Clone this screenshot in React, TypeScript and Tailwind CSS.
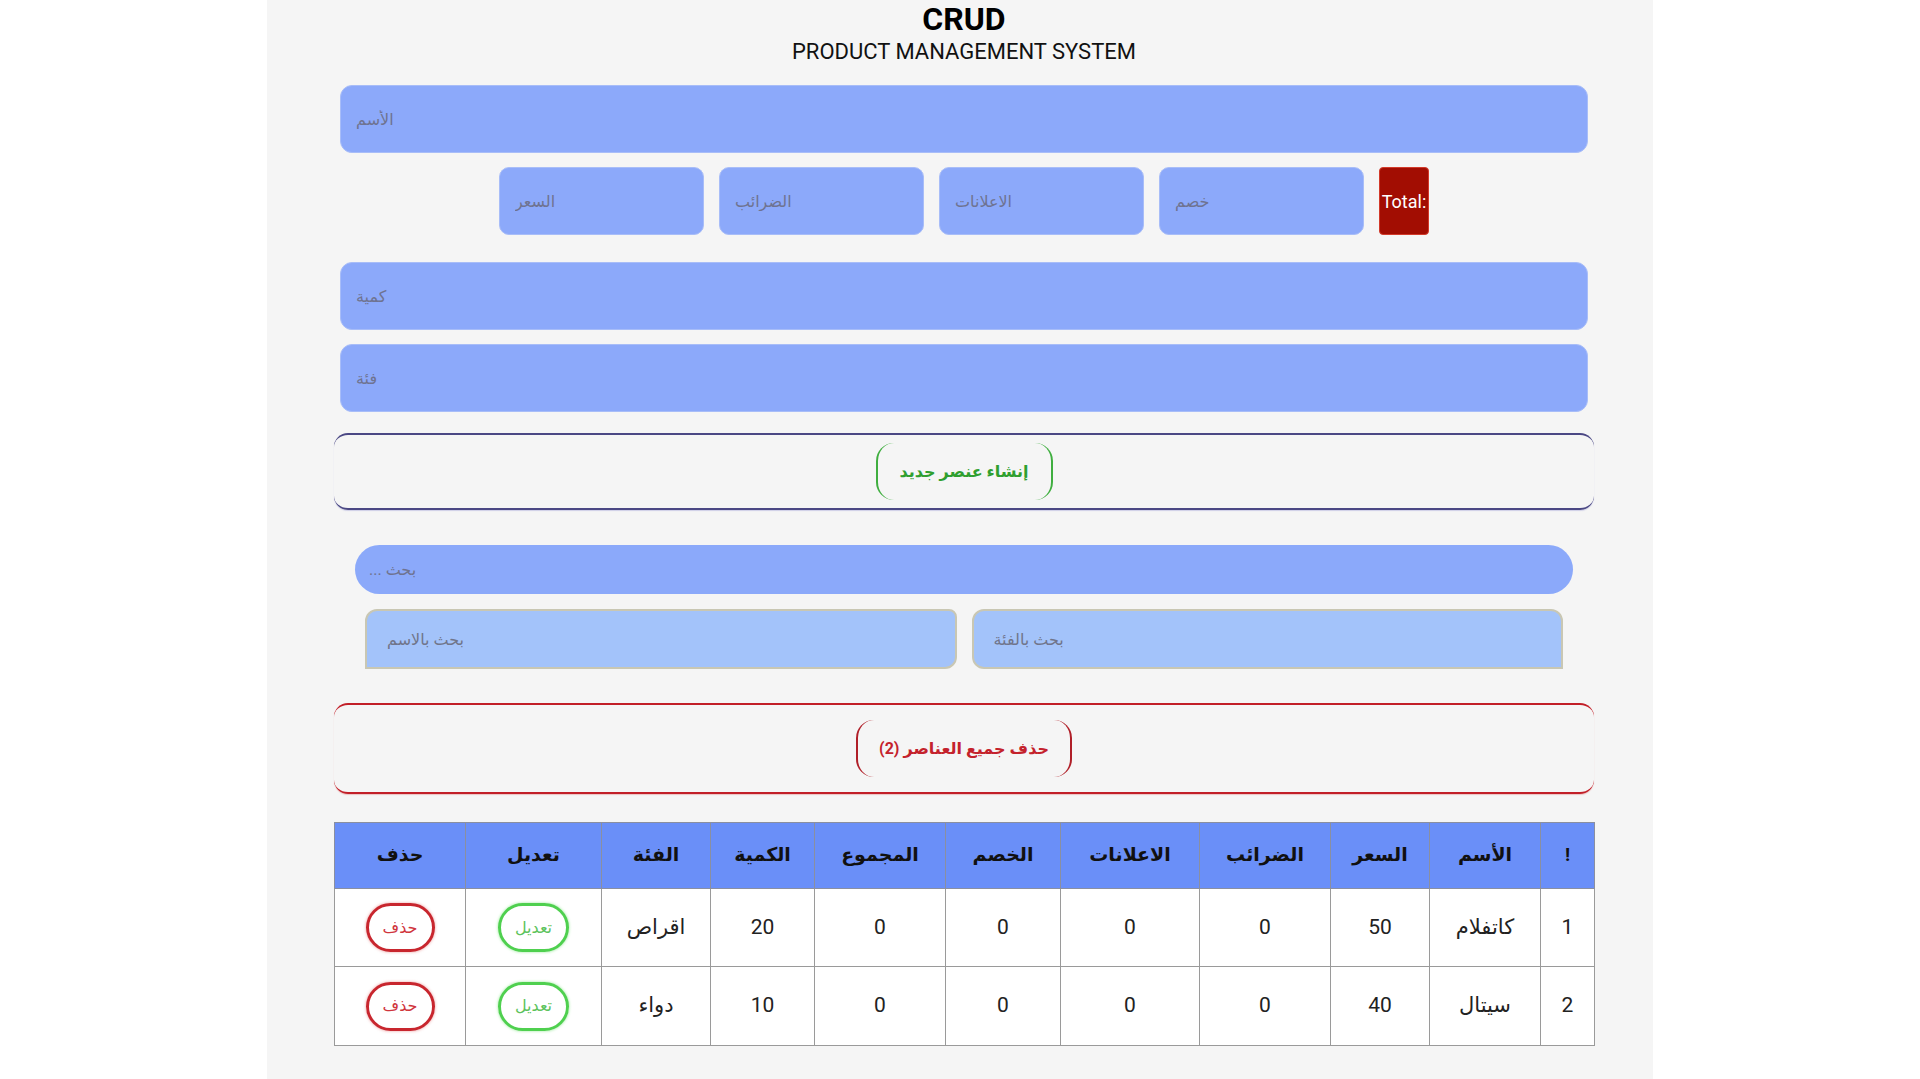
import React from "react";

const font = { fontFamily: "Roboto, 'DejaVu Sans', sans-serif" };

function Field({ ph, cls }: { ph: string; cls: string }) {
  return (
    <input
      placeholder={ph}
      className={
        "outline-none bg-[#8ca9fa] placeholder:text-[#6f7390] text-[16px] pl-[15px] border border-[#a8bdf8] " +
        cls
      }
    />
  );
}

const headers = ["!", "الأسم", "السعر", "الضرائب", "الاعلانات", "الخصم", "المجموع", "الكمية", "الفئة", "تعديل", "حذف"];
const widths = [54, 111, 99, 131, 139, 115, 131, 104, 109, 136, 131];
const rows = [
  ["1", "كاتفلام", "50", "0", "0", "0", "0", "20", "اقراص"],
  ["2", "سيتال", "40", "0", "0", "0", "0", "10", "دواء"],
];

export default function App() {
  return (
    <div className="w-full bg-white" style={font}>
      <div className="w-[1386px] mx-auto bg-[#f5f5f5] min-h-[1079px] pl-[67px] pr-[59px] text-[#111]">
        <h1 className="text-center text-[32px] font-bold leading-[38px] text-black">CRUD</h1>
        <h2 className="text-center text-[22px] leading-[26px] mt-[1px] text-[#111]">PRODUCT MANAGEMENT SYSTEM</h2>

        <div className="flex flex-col mx-[6px]">
          <Field ph="الأسم" cls="mt-[20px] h-[68px] w-full rounded-[12px]" />
          <div className="flex justify-center gap-[15px] mt-[14px]">
            <Field ph="السعر" cls="w-[205px] h-[68px] rounded-[10px]" />
            <Field ph="الضرائب" cls="w-[205px] h-[68px] rounded-[10px]" />
            <Field ph="الاعلانات" cls="w-[205px] h-[68px] rounded-[10px]" />
            <Field ph="خصم" cls="w-[205px] h-[68px] rounded-[10px]" />
            <div className="w-[50px] h-[68px] rounded-[4px] bg-[#a20d02] border border-[#d23a2a] text-white text-[18px] flex items-center justify-center">
              Total:
            </div>
          </div>
          <Field ph="كمية" cls="mt-[27px] h-[68px] w-full rounded-[12px]" />
          <Field ph="فئة" cls="mt-[14px] h-[68px] w-full rounded-[12px]" />
        </div>

        <div className="mt-[21px] h-[77px] border-y-[2px] border-[#4b4884] rounded-[14px] flex justify-center pt-[8px] shadow-[0_1px_1px_rgba(120,120,200,0.3)]">
          <button className="w-[177px] h-[57px] border-x-[2px] border-[#3fae3f] rounded-[18px] text-[#2f9f2f] font-bold text-[16px]">
            إنشاء عنصر جديد
          </button>
        </div>

        <div className="mx-[21px] mt-[35px]">
          <input
            placeholder="... بحث"
            className="w-full h-[49px] rounded-full bg-[#8ba9fa] pl-[14px] placeholder:text-[#6f7390] text-[16px] outline-none"
          />
        </div>
        <div className="flex gap-[15px] ml-[31px] mr-[31px] mt-[15px]">
          <input
            placeholder="بحث بالاسم"
            className="w-[592px] h-[60px] bg-[#a3c3fa] border-2 border-[#c9c7b3] rounded-tl-[12px] rounded-tr-[8px] rounded-br-[12px] pl-[20px] placeholder:text-[#70758a] text-[16px] outline-none"
          />
          <input
            placeholder="بحث بالفئة"
            className="w-[592px] h-[60px] bg-[#a3c3fa] border-2 border-[#c9c7b3] rounded-tl-[12px] rounded-bl-[12px] rounded-tr-[12px] pl-[20px] placeholder:text-[#70758a] text-[16px] outline-none"
          />
        </div>

        <div className="mt-[34px] h-[91px] border-y-[2px] border-[#c21f28] rounded-[14px] flex justify-center pt-[15px] shadow-[0_1px_1px_rgba(220,80,80,0.3)]">
          <button className="w-[216px] h-[57px] border-x-[2px] border-[#b01f28] rounded-[18px] text-[#c4222c] font-bold text-[16px]">
            حذف جميع العناصر (2)
          </button>
        </div>

        <table dir="rtl" className="mt-[28px] w-[1260px] border-collapse table-fixed">
          <colgroup>
            {widths.map((w, i) => (
              <col key={i} style={{ width: w }} />
            ))}
          </colgroup>
          <thead>
            <tr className="h-[66px] bg-[#6a8ff8]">
              {headers.map((h) => (
                <th key={h} className="border border-[#8a8fa0] text-[19px] font-bold text-[#111]">
                  {h}
                </th>
              ))}
            </tr>
          </thead>
          <tbody>
            {rows.map((r, ri) => (
              <tr key={ri} className={"bg-white " + (ri === 0 ? "h-[78px]" : "h-[79px]")}>
                {r.map((c, ci) => (
                  <td key={ci} className="border border-[#9a9a9a] text-center text-[21px] text-[#222]">
                    {c}
                  </td>
                ))}
                <td className="border border-[#9a9a9a] text-center">
                  <button className="w-[71px] h-[49px] rounded-full border-[3px] border-[#4fd04f] text-[#5cc35c] text-[16px] shadow-[0_0_3px_rgba(80,220,80,0.6)]">
                    تعديل
                  </button>
                </td>
                <td className="border border-[#9a9a9a] text-center">
                  <button className="w-[69px] h-[49px] rounded-full border-[3px] border-[#c8262e] text-[#d0353d] text-[16px] shadow-[0_0_3px_rgba(220,60,60,0.5)]">
                    حذف
                  </button>
                </td>
              </tr>
            ))}
          </tbody>
        </table>
      </div>
    </div>
  );
}
